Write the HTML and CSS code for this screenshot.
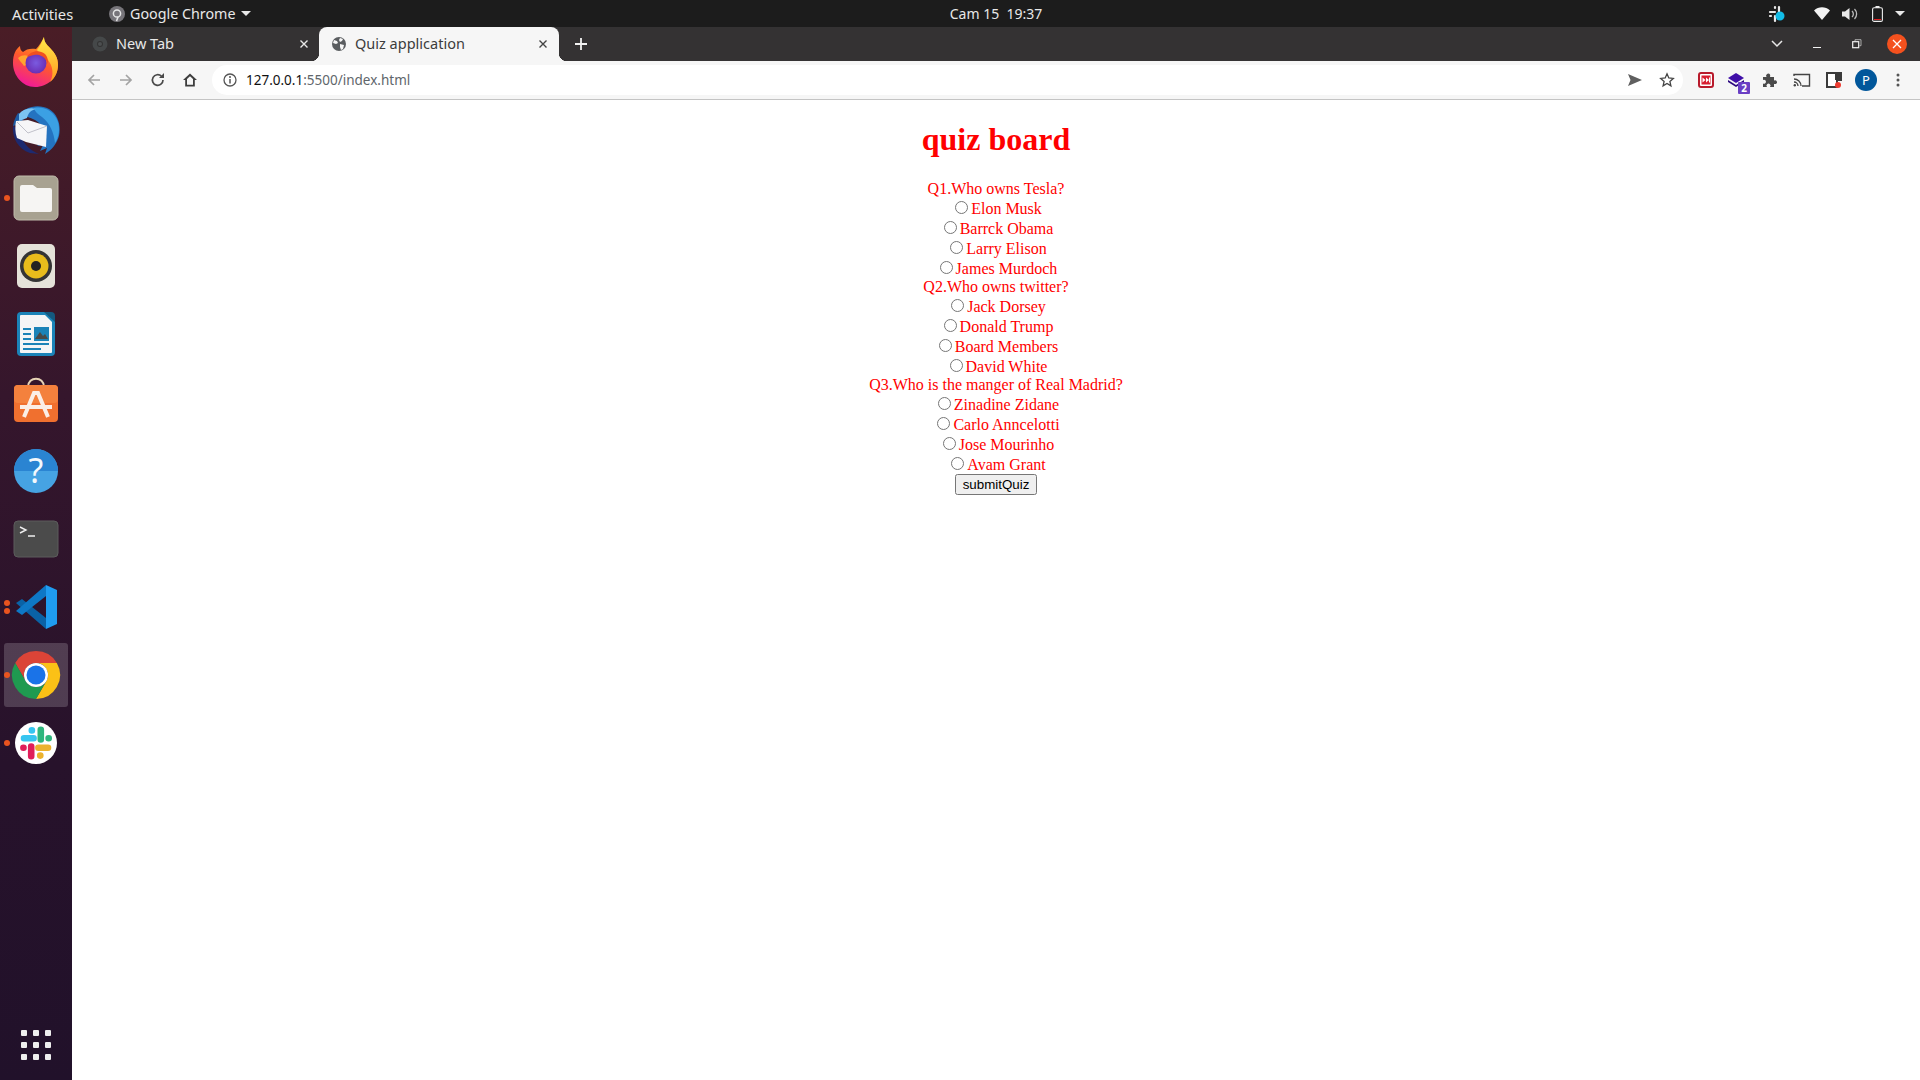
FILE: index.html
```html
<!DOCTYPE html>
<html lang="en">
<head>
    <meta charset="UTF-8">
    <meta name="viewport" content="width=device-width, initial-scale=1.0">
    <title>Quiz application</title>
    <link rel="stylesheet" href="styles.css">
</head>
<body>
    <header class="topbar">
        <div class="topbar-left">
            <span class="activities">Activities</span>
            <span class="app-menu">
                <svg class="app-icon" width="16" height="16" viewBox="0 0 16 16"><circle cx="8" cy="8" r="8" fill="#77757a"/><circle cx="8" cy="7.5" r="3.6" fill="none" stroke="#e6e6e6" stroke-width="1.5"/><path d="M9 11l-1.5 4" stroke="#e6e6e6" stroke-width="1.5"/></svg>
                Google Chrome
                <span class="caret"></span>
            </span>
        </div>
        <div class="clock">Cam 15&nbsp; 19:37</div>
        <div class="tray">
            <svg class="tray-slack" width="18" height="18" viewBox="0 0 18 18"><g stroke="#e8e8e8" stroke-width="2.2" stroke-linecap="round"><path d="M2 7h5M7 2v1M11 2v5M2 11h1M7 11v5M11 10h1"/></g><circle cx="12" cy="11" r="4.5" fill="#12bde8"/></svg>
            <svg class="tray-wifi" width="16" height="13" viewBox="0 0 16 13"><path d="M0 3.5C4.500-.8 11.500-.8 16 3.500L8 13z" fill="#f2f2f2"/></svg>
            <svg class="tray-sound" width="16" height="14" viewBox="0 0 16 14"><path d="M0 4.500h3L7.500 1v12L3 9.500H0z" fill="#e8e8e8"/><path d="M10 4a4 4 0 010 6M12.500 2a7 7 0 010 10" fill="none" stroke="#bbb" stroke-width="1.300"/></svg>
            <svg class="tray-battery" width="11" height="16" viewBox="0 0 11 16"><rect x=".6" y="1.800" width="9.800" height="13.600" rx="1.500" fill="none" stroke="#eee" stroke-width="1.100"/><rect x="3.500" y="0" width="4" height="2" fill="#eee"/><rect x="2" y="13" width="7" height="1" fill="#e02020"/></svg>
            <span class="caret caret-tray"></span>
        </div>
    </header>

    <div class="desktop">
        <nav class="dock">
            <div class="dock-item">
                <svg width="52" height="52" viewBox="0 2 52 52">
                    <defs>
                        <linearGradient id="ffBody" x1="0.700" y1="0" x2="0.300" y2="1"><stop offset="0" stop-color="#ffb11f"/><stop offset="0.500" stop-color="#ff5a2c"/><stop offset="1" stop-color="#f0169e"/></linearGradient>
                        <linearGradient id="ffTip" x1="0.500" y1="0" x2="0.500" y2="1"><stop offset="0" stop-color="#ffe94a"/><stop offset="1" stop-color="#ff9a1f"/></linearGradient>
                        <radialGradient id="ffCore"><stop offset="0" stop-color="#7a5be0"/><stop offset="1" stop-color="#6b2fb5"/></radialGradient>
                    </defs>
                    <path d="M3 29C3 20 6 15 10 12c0 3 1 5 3 6 3-3 8-4 13-3 3-3 6-8 8-12 0 5 3 8 6 11 5 5 8 10 8 17 0 12-10 22-23 22S3 41 3 29z" fill="url(#ffBody)"/>
                    <path d="M34 3c0 5 3 8 6 11 5 5 8 10 8 17 0 7-3 13-8 17 4-7 3-16-2-22-4-5-9-7-11-10 3-4 5-8 7-13z" fill="url(#ffTip)"/>
                    <path d="M8 24c5-4 10-3 13 0 2 2 0 5-3 6l-4 2c-2-3-5-6-6-8z" fill="#ffa52e"/>
                    <circle cx="26" cy="29" r="10.500" fill="url(#ffCore)"/>
                    <path d="M17 23c3-6 12-8 18-3 3 3 3 7 3 10-3-8-9-10-14-9-3 1-5 1-7 2z" fill="#f0501f"/>
                </svg>
            </div>
            <div class="dock-item">
                <svg width="52" height="52" viewBox="0 0 52 52">
                    <path d="M3 22C2 34 8 45 20 49l9 1C19 46 11 38 8 24z" fill="#1d2a70"/>
                    <path d="M8 12C14 3 28-1 39 5c10 6 12 18 10 27-2 7-7 14-14 18l2-6-7 3 3-6-6 1c6-4 8-8 7-14C32 18 22 12 8 12z" fill="#2473c0"/>
                    <path d="M24 4c10-2 20 3 24 14 2 7 1 15-3 21-1-10-5-20-13-26-4-3-7-5-8-9z" fill="#3ba0e4"/>
                    <path d="M3 22c1-6 3-10 5-13l8 3-6 8z" fill="#1c5aa3"/>
                    <path d="M6 17l12-1 19 6-1 21-20-5-9-4c-2-5-2-12-1-17z" fill="#f6f6f8"/>
                    <path d="M7 18l11 11 19-7" fill="none" stroke="#b4b4be" stroke-width="0.800"/>
                    <path d="M9 10c4-5 11-7 17-5-5 1-8 4-9 9l-8 3z" fill="#7cc4f2"/>
                </svg>
            </div>
            <div class="dock-item">
                <span class="run-dot"></span>
                <svg width="52" height="52" viewBox="0 0 52 52">
                    <rect x="4" y="4" width="44" height="44" rx="5" fill="#a8a291" stroke="#c0bbab"/>
                    <path d="M10 15a2 2 0 012-2h11l4 3h13a2 2 0 012 2v20a2 2 0 01-2 2H12a2 2 0 01-2-2z" fill="#f6f5f3"/>
                </svg>
            </div>
            <div class="dock-item">
                <svg width="52" height="52" viewBox="0 0 52 52">
                    <rect x="7" y="4" width="38" height="44" rx="5" fill="#e5e2d9"/>
                    <circle cx="26" cy="26" r="16" fill="#343434"/>
                    <circle cx="26" cy="26" r="12.500" fill="#e8bc1c"/>
                    <circle cx="26" cy="26" r="5" fill="#222"/>
                </svg>
            </div>
            <div class="dock-item">
                <svg width="52" height="52" viewBox="0 0 52 52">
                    <path d="M11 4h25l9 9v31a4 4 0 01-4 4H11a4 4 0 01-4-4V8a4 4 0 014-4z" fill="#1b83b8"/>
                    <path d="M11 7h24l7 7v30a1 1 0 01-1 1H11a1 1 0 01-1-1V8a1 1 0 011-1z" fill="#f4f5f6"/>
                    <path d="M34 4h7a4 4 0 014 4v6z" fill="#14597f"/>
                    <path d="M13 20h8v2h-8zM13 25h8v2h-8zM13 30h8v2h-8zM13 35h26v2H13zM13 40h18v2H13z" fill="#1b83b8"/>
                    <rect x="24" y="19" width="15" height="14" fill="#1b83b8"/>
                    <path d="M25 31l5-7 3 4 2-2 3 5z" fill="#4a4a48"/>
                </svg>
            </div>
            <div class="dock-item">
                <svg width="52" height="52" viewBox="0 0 52 52">
                    <path d="M18 10c0-11 16-11 16 0" fill="none" stroke="#e6d3b5" stroke-width="2"/>
                    <rect x="4" y="8" width="44" height="37" rx="4" fill="#f0702f"/>
                    <rect x="4" y="8" width="44" height="18" rx="4" fill="#f4813d"/>
                    <path d="M14 40l10-24h4l10 24M10 30h32" fill="none" stroke="#fbeee6" stroke-width="4"/>
                </svg>
            </div>
            <div class="dock-item">
                <svg width="52" height="52" viewBox="0 0 52 52">
                    <circle cx="26" cy="26" r="22" fill="#46a3e3"/>
                    <path d="M4 26a22 22 0 0144 0z" fill="#2a84d2"/>
                    <text class="help-mark" x="26" y="38" text-anchor="middle">?</text>
                </svg>
            </div>
            <div class="dock-item">
                <svg width="52" height="52" viewBox="0 0 52 52">
                    <rect x="4" y="8" width="44" height="36" rx="4" fill="#4b4b4b" stroke="#5c5c5c"/>
                    <path d="M10 14l6 3-6 3M18 23h7" fill="none" stroke="#eee" stroke-width="1.400"/>
                </svg>
            </div>
            <div class="dock-item">
                <span class="run-dot run-dot-a"></span>
                <span class="run-dot run-dot-b"></span>
                <svg width="52" height="52" viewBox="0 0 52 52">
                    <path d="M6 22l6-4 24 19v11z" fill="#0a62a6"/>
                    <path d="M36 4v11L12 34l-6-4z" fill="#0e78c6"/>
                    <path d="M36 4l11 5v34l-11 5z" fill="#1f9cf0"/>
                </svg>
            </div>
            <div class="dock-item dock-item-active">
                <span class="run-dot"></span>
                <svg width="52" height="52" viewBox="0 0 52 52">
                    <path d="M26 2A24 24 0 005.200 14L15.600 32A12 12 0 0126 14H46.800A24 24 0 0026 2z" fill="#db4437"/>
                    <path d="M46.800 14H26A12 12 0 0136.400 32L26 50A24 24 0 0046.800 14z" fill="#fbc116"/>
                    <path d="M5.200 14A24 24 0 0026 50L36.400 32A12 12 0 0115.600 32z" fill="#1f9a50"/>
                    <circle cx="26" cy="26" r="12" fill="#fff"/>
                    <circle cx="26" cy="26" r="9.500" fill="#1a73e8"/>
                </svg>
            </div>
            <div class="dock-item">
                <span class="run-dot"></span>
                <svg width="52" height="52" viewBox="0 0 52 52">
                    <circle cx="26" cy="26" r="21" fill="#fff"/>
                    <g stroke-width="5.500" stroke-linecap="round" fill="none" transform="translate(26 26) scale(1.200) translate(-26 -26)">
                        <path d="M16 22h8M22.500 15.500h.1" stroke="#36c5f0"/>
                        <path d="M30 15v8M36.500 22h.1" stroke="#2eb67d"/>
                        <path d="M28 30h8M29.500 36.500h.1" stroke="#ecb22e"/>
                        <path d="M22 29v8M15.500 30h.1" stroke="#e01e5a"/>
                    </g>
                </svg>
            </div>
            <div class="dock-grid">
                <span></span><span></span><span></span>
                <span></span><span></span><span></span>
                <span></span><span></span><span></span>
            </div>
        </nav>

        <div class="window">
            <div class="tabstrip">
                <div class="tab">
                    <svg width="16" height="16" viewBox="0 0 16 16"><circle cx="8" cy="8" r="7.500" fill="#454849"/><circle cx="8" cy="8" r="3" fill="#333"/><circle cx="8" cy="8" r="2" fill="#4c4f50"/></svg>
                    <span class="tab-title">New Tab</span>
                    <svg class="tab-close" width="16" height="16" viewBox="0 0 16 16"><path d="M4.500 4.500l7 7M11.500 4.500l-7 7" stroke="#e8e8e8" stroke-width="1.400"/></svg>
                </div>
                <div class="tab tab-active">
                    <svg width="16" height="16" viewBox="0 0 16 16"><circle cx="8" cy="8" r="7" fill="#5a5d60"/><path d="M3 4l3 1 1 2-2 1-3-1zM9 2l3 1-1 2-2 1-1-2zM9 8l4 1-1 4-2 1-1-3z" fill="#f6f6f6"/></svg>
                    <span class="tab-title">Quiz application</span>
                    <svg class="tab-close" width="16" height="16" viewBox="0 0 16 16"><path d="M4.500 4.500l7 7M11.500 4.500l-7 7" stroke="#444" stroke-width="1.400"/></svg>
                </div>
                <div class="newtab">
                    <svg width="14" height="14" viewBox="0 0 14 14"><path d="M7 1v12M1 7h12" stroke="#f2f2f2" stroke-width="1.800"/></svg>
                </div>
                <div class="winctl winctl-first">
                    <svg width="14" height="10" viewBox="0 0 14 10"><path d="M2 2l5 5 5-5" fill="none" stroke="#e8e8e8" stroke-width="1.500"/></svg>
                </div>
                <div class="winctl">
                    <svg width="10" height="10" viewBox="0 0 10 10"><path d="M1 8.500h8" stroke="#f2f2f2" stroke-width="1"/></svg>
                </div>
                <div class="winctl">
                    <svg width="10" height="10" viewBox="0 0 10 10"><path d="M3 2V.7h6v6H7.500" fill="none" stroke="#aaa" stroke-width="1"/><rect x=".7" y="2.700" width="6" height="6" fill="none" stroke="#f2f2f2" stroke-width="1.200"/></svg>
                </div>
                <div class="winctl">
                    <span class="win-close"><svg width="10" height="10" viewBox="0 0 10 10"><path d="M1 1l8 8M9 1l-8 8" stroke="#fff" stroke-width="1.300"/></svg></span>
                </div>
            </div>

            <div class="toolbar">
                <div class="tool"><svg width="16" height="16" viewBox="0 0 16 16"><path d="M14 8H3M8 3L3 8l5 5" fill="none" stroke="#a3a3a3" stroke-width="1.700"/></svg></div>
                <div class="tool"><svg width="16" height="16" viewBox="0 0 16 16"><path d="M2 8h11M8 3l5 5-5 5" fill="none" stroke="#a3a3a3" stroke-width="1.700"/></svg></div>
                <div class="tool"><svg width="16" height="16" viewBox="0 0 16 16"><path d="M13 8a5.300 5.300 0 11-1.600-3.800" fill="none" stroke="#4a4a4a" stroke-width="1.700"/><path d="M14 1v5H9z" fill="#4a4a4a"/></svg></div>
                <div class="tool"><svg width="16" height="16" viewBox="0 0 16 16"><path d="M8 1.500L1 8h2.200v6.500h9.600V8H15zM5 12.800V7l3-2.800L11 7v5.800z" fill="#3d3d3d" fill-rule="evenodd"/></svg></div>
                <div class="omnibox">
                    <svg class="omni-info" width="16" height="16" viewBox="0 0 16 16"><circle cx="8" cy="8" r="6" fill="none" stroke="#555" stroke-width="1.300"/><path d="M8 7v4.500" stroke="#555" stroke-width="1.500"/><circle cx="8" cy="5" r="1" fill="#555"/></svg>
                    <span class="url"><span class="url-host">127.0.0.1</span>:5500/index.html</span>
                    <div class="tool tool-send"><svg width="14" height="12" viewBox="0 0 14 12"><path d="M0 0l14 6-14 6 2.500-6z" fill="#5f5f5f"/></svg></div>
                    <div class="tool"><svg width="16" height="16" viewBox="0 0 16 16"><path d="M8 1.800l1.800 4.200 4.500.4-3.400 3 1 4.500L8 11.500l-3.900 2.400 1-4.500-3.400-3 4.500-.4z" fill="none" stroke="#444" stroke-width="1.300"/></svg></div>
                </div>
                <div class="tool"><svg width="16" height="16" viewBox="0 0 16 16"><rect x="1" y="1" width="14" height="14" rx="2" fill="#fff" stroke="#b81a2b" stroke-width="2"/><rect x="3.500" y="3.500" width="9" height="9" fill="#d81e30"/><path d="M4.500 5.500L7.500 8l-3 2.500zM8 5.500L11 8l-3 2.500z" fill="#fff"/><path d="M11 5.500h1v5h-1z" fill="#fff"/></svg></div>
                <div class="tool tool-ext">
                    <svg class="ext-mark" width="16" height="16" viewBox="0 0 16 16"><path d="M8 1l8 5-8 5-8-5z" fill="#3f0fa8"/><path d="M0 8l8 5 8-5v2l-8 5-8-5z" fill="#2c0a80"/></svg>
                    <span class="ext-badge">2</span>
                </div>
                <div class="tool"><svg width="16" height="16" viewBox="0 0 16 16"><path d="M1 5h3.500a2 2 0 013.500-2.500c.3.800.3 1.500 0 2.500H12v3.500a2 2 0 112 3.500h-2V15H8a2 2 0 10-3 0H1v-3.500a2 2 0 100-3.500z" fill="#4a4a4a"/></svg></div>
                <div class="tool"><svg width="18" height="14" viewBox="0 0 18 14"><path d="M1 3V1.500h15.500v11.500H9" fill="none" stroke="#444" stroke-width="1.400"/><path d="M1 6a7 7 0 017 7M1 9a4 4 0 014 4" fill="none" stroke="#444" stroke-width="1.300"/><circle cx="1.800" cy="12.200" r="1.200" fill="#444"/></svg></div>
                <div class="tool"><svg width="16" height="16" viewBox="0 0 16 16"><path d="M1 1h14v7h-4v7H1z" fill="#fff" stroke="#3a3a3a" stroke-width="2"/><rect x="9" y="1" width="6" height="7" fill="#3a3a3a"/><circle cx="12" cy="13" r="3" fill="#ee3b30"/></svg></div>
                <div class="tool"><span class="avatar">P</span></div>
                <div class="tool"><svg width="4" height="14" viewBox="0 0 4 14"><circle cx="2" cy="2" r="1.500" fill="#555"/><circle cx="2" cy="7" r="1.500" fill="#555"/><circle cx="2" cy="12" r="1.500" fill="#555"/></svg></div>
            </div>

            <main class="page">
                <h1>quiz board</h1>
                <form id="quizForm">
                    <div>Q1.Who owns Tesla?</div>
                    <div><input type="radio" name="q1" id="q1a"><label for="q1a">Elon Musk</label></div>
                    <div><input type="radio" name="q1" id="q1b"><label for="q1b">Barrck Obama</label></div>
                    <div><input type="radio" name="q1" id="q1c"><label for="q1c">Larry Elison</label></div>
                    <div><input type="radio" name="q1" id="q1d"><label for="q1d">James Murdoch</label></div>
                    <div>Q2.Who owns twitter?</div>
                    <div><input type="radio" name="q2" id="q2a"><label for="q2a">Jack Dorsey</label></div>
                    <div><input type="radio" name="q2" id="q2b"><label for="q2b">Donald Trump</label></div>
                    <div><input type="radio" name="q2" id="q2c"><label for="q2c">Board Members</label></div>
                    <div><input type="radio" name="q2" id="q2d"><label for="q2d">David White</label></div>
                    <div>Q3.Who is the manger of Real Madrid?</div>
                    <div><input type="radio" name="q3" id="q3a"><label for="q3a">Zinadine Zidane</label></div>
                    <div><input type="radio" name="q3" id="q3b"><label for="q3b">Carlo Anncelotti</label></div>
                    <div><input type="radio" name="q3" id="q3c"><label for="q3c">Jose Mourinho</label></div>
                    <div><input type="radio" name="q3" id="q3d"><label for="q3d">Avam Grant</label></div>
                    <button type="button" class="submit-btn">submitQuiz</button>
                </form>
            </main>
        </div>
    </div>
</body>
</html>
```

FILE: styles.css
```css
body {
    margin: 0;
    height: 100vh;
    overflow: hidden;
    display: flex;
    flex-direction: column;
    font-family: "Liberation Serif", serif;
}

/* top bar */
.topbar {
    height: 27px;
    flex-shrink: 0;
    background: #1c1c1c;
    color: #e8e8e8;
    font-family: "Noto Sans", sans-serif;
    font-size: 14px;
    display: grid;
    grid-template-columns: 946px 100px 1fr;
    align-items: center;
}
.topbar-left {
    display: flex;
    align-items: center;
    padding-left: 12px;
}
.activities {
    width: 97px;
    font-size: 14.7px;
}
.app-menu {
    display: flex;
    align-items: center;
    gap: 5px;
    font-size: 14.3px;
}
.caret {
    display: inline-block;
    border-top: 5px solid #e8e8e8;
    border-left: 5px solid transparent;
    border-right: 5px solid transparent;
}
.clock {
    text-align: center;
    white-space: nowrap;
}
.tray {
    display: flex;
    align-items: center;
    justify-content: flex-end;
    padding-right: 15px;
}
.tray-slack {
    margin-right: 28px;
}
.tray-sound {
    margin: 0 12px;
}
.tray-battery {
    margin-left: 2px;
}
.caret-tray {
    margin-left: 12px;
}

.desktop {
    flex: 1;
    display: flex;
    min-height: 0;
}

/* dock */
.dock {
    width: 72px;
    flex-shrink: 0;
    padding-top: 1px;
    display: flex;
    flex-direction: column;
    background: linear-gradient(180deg, #4a1d26 0%, #35162c 35%, #27122b 70%, #21112a 100%);
}
.dock-item {
    position: relative;
    height: 68.1px;
    flex-shrink: 0;
    display: flex;
    align-items: center;
    justify-content: center;
}
.dock-item-active::before {
    content: "";
    position: absolute;
    left: 4px;
    right: 4px;
    top: 2px;
    bottom: 2px;
    border-radius: 3px;
    background: rgba(255, 255, 255, 0.18);
}
.dock-item svg {
    position: relative;
}
.run-dot {
    position: absolute;
    left: 4px;
    top: 31px;
    width: 6px;
    height: 6px;
    border-radius: 50%;
    background: #e9541f;
    z-index: 1;
}
.run-dot-a {
    top: 27px;
}
.run-dot-b {
    top: 35px;
}
.help-mark {
    font-family: "Noto Sans", sans-serif;
    font-size: 34px;
    fill: #f4f8fc;
}
.dock-grid {
    margin-top: auto;
    margin-bottom: 20px;
    align-self: center;
    display: grid;
    grid-template-columns: repeat(3, 6px);
    grid-gap: 6px;
}
.dock-grid span {
    width: 6px;
    height: 6px;
    border-radius: 1px;
    background: #eeeeee;
}

/* browser window */
.window {
    flex: 1;
    min-width: 0;
    display: flex;
    flex-direction: column;
}
.tabstrip {
    height: 34px;
    flex-shrink: 0;
    background: #343233;
    padding-left: 8px;
    padding-right: 3px;
    display: flex;
    font-family: "Noto Sans", sans-serif;
    font-size: 14.5px;
}
.tab {
    position: relative;
    width: 240px;
    box-sizing: border-box;
    padding: 0 8px 0 12px;
    display: flex;
    align-items: center;
    gap: 8px;
    color: #e8e8e8;
}
.tab-title {
    flex: 1;
    padding-bottom: 2px;
}
.tab-active {
    margin-left: -1px;
    background: #f6f6f6;
    color: #3c3c3c;
    border-radius: 8px 8px 0 0;
}
.tab-active::before,
.tab-active::after {
    content: "";
    position: absolute;
    bottom: 0;
    width: 8px;
    height: 8px;
}
.tab-active::before {
    left: -8px;
    background: radial-gradient(circle at 0 0, transparent 8px, #f6f6f6 8.500px);
}
.tab-active::after {
    right: -8px;
    background: radial-gradient(circle at 100% 0, transparent 8px, #f6f6f6 8.500px);
}
.newtab {
    width: 40px;
    margin-left: 2px;
    display: flex;
    align-items: center;
    justify-content: center;
}
.winctl {
    width: 40px;
    display: flex;
    align-items: center;
    justify-content: center;
}
.winctl-first {
    margin-left: auto;
}
.win-close {
    width: 20px;
    height: 20px;
    border-radius: 50%;
    background: #f4511e;
    display: flex;
    align-items: center;
    justify-content: center;
}

.toolbar {
    height: 39px;
    flex-shrink: 0;
    box-sizing: border-box;
    background: #f6f6f6;
    border-bottom: 1px solid #c4c4c4;
    padding: 0 6px;
    display: flex;
    align-items: center;
}
.tool {
    position: relative;
    width: 32px;
    height: 30px;
    flex-shrink: 0;
    display: flex;
    align-items: center;
    justify-content: center;
}
.omnibox {
    flex: 1;
    height: 30px;
    margin: 0 7px 0 6px;
    padding-left: 10px;
    border-radius: 15px;
    background: #fff;
    display: flex;
    align-items: center;
    font-family: "Noto Sans", sans-serif;
    font-size: 13.5px;
    color: #60666b;
}
.omni-info {
    margin-right: 8px;
}
.url {
    flex: 1;
}
.url-host {
    color: #111;
}
.ext-mark {
    margin-right: 4px;
}
.ext-badge {
    position: absolute;
    right: 4px;
    bottom: 1px;
    width: 12px;
    height: 12px;
    background: #6a3fc4;
    border-radius: 1px;
    color: #fff;
    font-family: "Noto Sans", sans-serif;
    font-size: 10px;
    font-weight: bold;
    line-height: 12px;
    text-align: center;
}
.avatar {
    width: 22px;
    height: 22px;
    border-radius: 50%;
    background: #01579b;
    color: #fff;
    font-family: "Noto Sans", sans-serif;
    font-size: 13px;
    line-height: 22px;
    text-align: center;
}

/* quiz page */
.page {
    flex: 1;
    background: #fff;
    color: red;
    text-align: center;
}
.submit-btn {
    font-family: "Liberation Sans", sans-serif;
    font-size: 13.333px;
}
```
